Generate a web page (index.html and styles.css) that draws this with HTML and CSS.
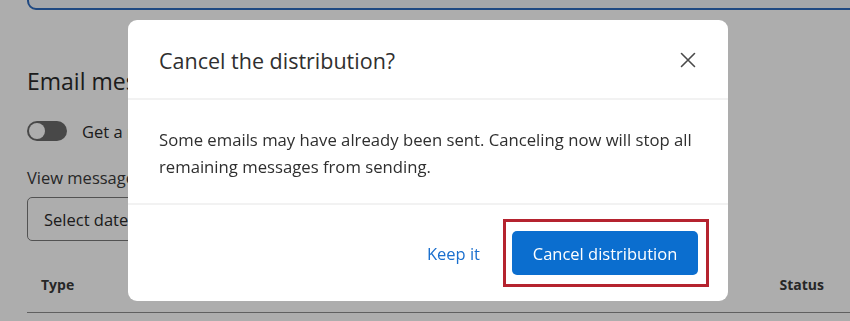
FILE: index.html
```html
<!DOCTYPE html>
<html lang="en">
<head>
<meta charset="utf-8">
<title>Cancel the distribution</title>
<link rel="stylesheet" href="styles.css">
</head>
<body>
<div class="page">
  <div class="top-card"></div>
  <h2 class="section-title">Email messages</h2>
  <div class="toggle-row">
    <span class="toggle"><span class="knob"></span></span>
    <span class="toggle-label">Get a notification</span>
  </div>
  <div class="field-label">View messages sent</div>
  <div class="select">Select date range</div>
  <div class="table-head">
    <span class="th">Type</span>
    <span class="th">Status</span>
  </div>
</div>
<div class="overlay"></div>
<div class="modal" role="dialog">
  <div class="modal-header">
    <h1 class="modal-title">Cancel the distribution?</h1>
    <button class="close" aria-label="Close">
      <svg width="16" height="16" viewBox="0 0 16 16"><path d="M1.5 1.5 L14.5 14.5 M14.5 1.5 L1.5 14.5" stroke="#4a4a4a" stroke-width="1.6" fill="none" stroke-linecap="round"/></svg>
    </button>
  </div>
  <div class="modal-body">
    Some emails may have already been sent. Canceling now will stop all remaining messages from sending.
  </div>
  <div class="modal-footer">
    <button class="link-btn">Keep it</button>
    <span class="highlight">
      <button class="primary-btn">Cancel distribution</button>
    </span>
  </div>
</div>
</body>
</html>
```
FILE: styles.css
```css
* { box-sizing: border-box; }
html, body { margin: 0; padding: 0; }
body {
  width: 850px;
  height: 321px;
  overflow: hidden;
  background: #ffffff;
  font-family: "Open Sans", "Noto Sans", sans-serif;
  color: #2a2a2a;
}
.page {
  padding: 0 0 0 27px;
  display: flex;
  flex-direction: column;
}
.top-card {
  height: 30px;
  margin-top: -20px;
  margin-right: -20px;
  border: 2px solid #2f6cc0;
  border-radius: 9px;
  background: #f3f6fb;
}
.section-title {
  margin: 56px 0 0 0;
  font-size: 23px;
  font-weight: 400;
  line-height: 30px;
  color: #2a2a2a;
}
.toggle-row {
  display: flex;
  align-items: center;
  gap: 15px;
  margin-top: 24px;
  height: 22px;
}
.toggle {
  width: 40px;
  height: 20px;
  border-radius: 10px;
  background: #6b6b6b;
  display: flex;
  align-items: center;
  padding: 0 2px;
}
.knob {
  width: 16px;
  height: 16px;
  border-radius: 50%;
  background: #ffffff;
}
.toggle-label { font-size: 16.5px; }
.field-label {
  margin-top: 25px;
  font-size: 16.5px;
  line-height: 22px;
  color: #3a3a3a;
}
.select {
  margin-top: 8px;
  width: 220px;
  height: 44px;
  border: 1px solid #7a7a7a;
  border-radius: 5px;
  padding: 0 16px;
  display: flex;
  align-items: center;
  font-size: 16.5px;
}
.table-head {
  margin-top: 30px;
  display: flex;
  justify-content: space-between;
  padding: 4px 26px 0 14px;
  height: 42px;
  border-bottom: 1px solid #8e8e8e;
  align-items: flex-start;
}
.th { font-size: 14px; font-weight: 700; color: #3a3a3a; }

.overlay {
  position: fixed;
  inset: 0;
  background: rgba(0, 0, 0, 0.32);
}
.modal {
  position: fixed;
  left: 128px;
  top: 20px;
  width: 600px;
  height: 281px;
  background: #ffffff;
  border-radius: 9px;
  display: flex;
  flex-direction: column;
}
.modal-header {
  height: 80px;
  border-bottom: 2px solid #f2f2f2;
  display: flex;
  align-items: center;
  justify-content: space-between;
  padding: 2px 32px 0 31px;
}
.modal-title {
  margin: 0;
  font-size: 21.5px;
  font-weight: 400;
  color: #2f2f2f;
}
.close {
  border: 0;
  background: none;
  padding: 0;
  width: 16px;
  height: 16px;
  display: flex;
}
.modal-body {
  height: 105px;
  border-bottom: 2px solid #f2f2f2;
  padding: 26px 20px 0 31px;
  font-size: 16.7px;
  line-height: 27px;
  color: #2f2f2f;
}
.modal-footer {
  flex: 1;
  display: flex;
  align-items: center;
  justify-content: flex-end;
  gap: 32px;
  padding: 0 30px 0 0;
}
.link-btn {
  border: 0;
  background: none;
  padding: 0;
  font-family: inherit;
  font-size: 16.5px;
  color: #1a6fce;
}
.highlight {
  position: relative;
  display: flex;
}
.highlight::after {
  content: "";
  position: absolute;
  left: -9px;
  right: -11px;
  top: -12px;
  bottom: -12px;
  border: 3px solid #b5232f;
}
.primary-btn {
  width: 186px;
  height: 44px;
  border: 0;
  border-radius: 5px;
  background: #0b6ecf;
  color: #ffffff;
  font-family: inherit;
  font-size: 16.5px;
}
```
